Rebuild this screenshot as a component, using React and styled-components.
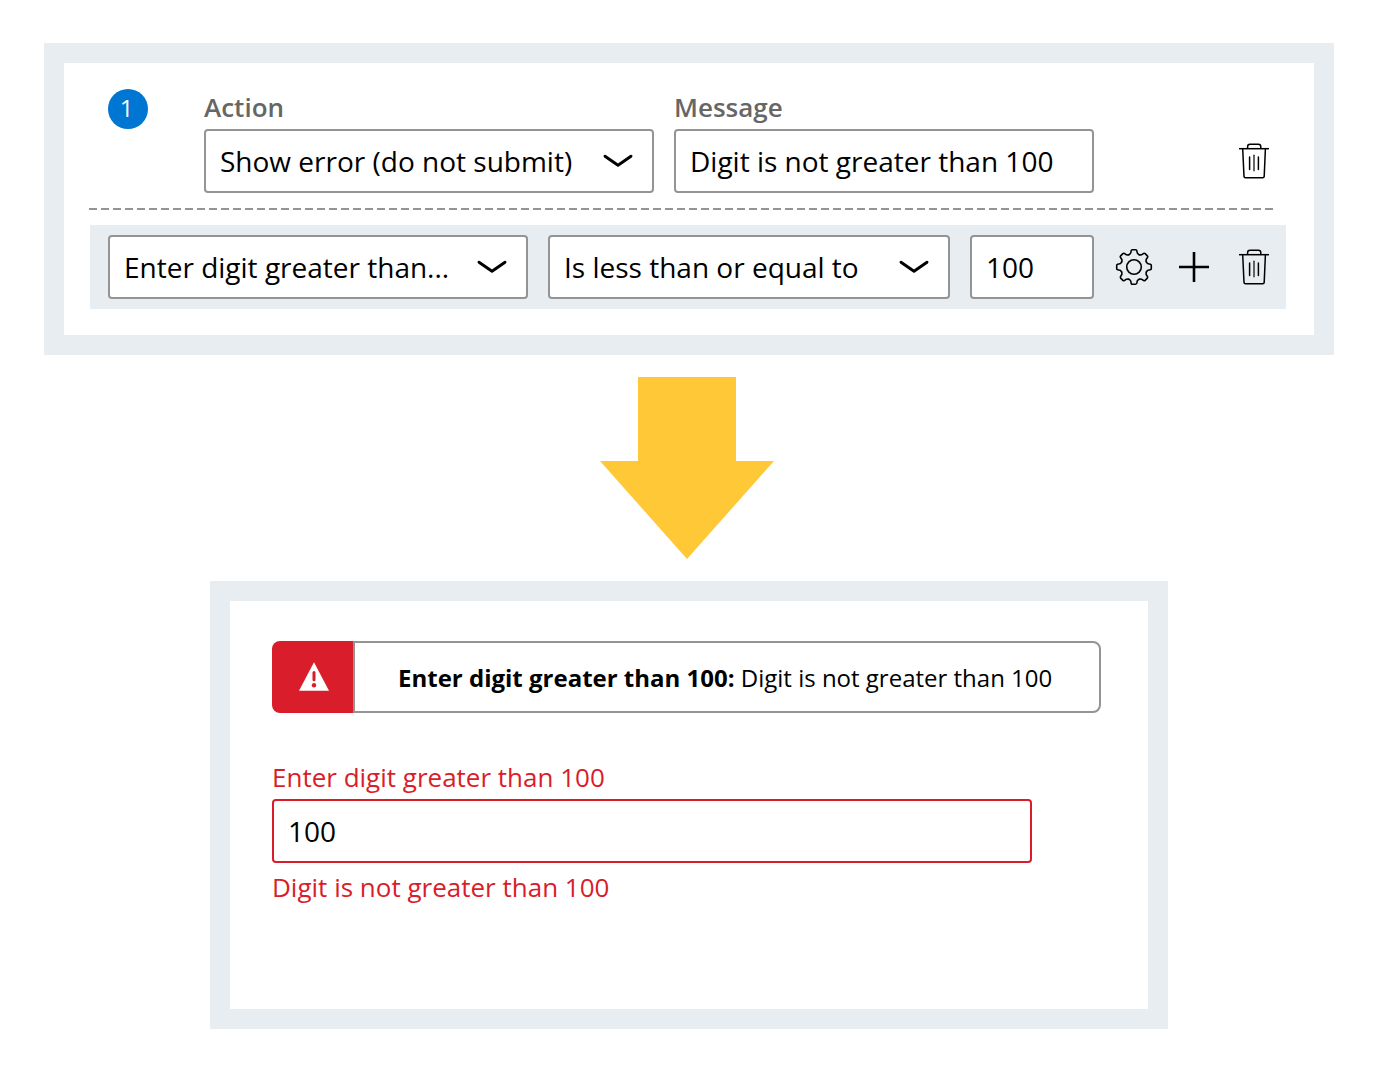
import React, { useState } from "react";
import styled, { createGlobalStyle } from "styled-components";

const color = {
  frame: "#e8edf1",
  line: "#949494",
  label: "#666666",
  red: "#d91d2a",
  blue: "#0076d3",
  yellow: "#ffc836",
};

const GlobalStyle = createGlobalStyle`
  *, *::before, *::after { box-sizing: border-box; }
  body {
    margin: 0;
    background: #ffffff;
    color: #000000;
    font-family: "Open Sans", "Noto Sans", sans-serif;
  }
  input, select, button { font-family: inherit; color: inherit; }
`;

const Page = styled.main`
  display: flex;
  flex-direction: column;
  align-items: center;
  gap: 22px;
  padding: 43px 46px 48px 44px;
`;

const Panel = styled.section`
  width: 100%;
  max-width: ${(p) => p.$maxWidth || "none"};
  border: 20px solid ${color.frame};
  padding: ${(p) => p.$padding};
`;

const RuleHeader = styled.div`
  display: flex;
  align-items: flex-end;
  padding: 0 2px 0 18px;
`;

const StepBadge = styled.span`
  display: flex;
  align-items: center;
  justify-content: center;
  align-self: flex-start;
  flex: none;
  width: 40px;
  height: 40px;
  margin-right: 56px;
  padding: 0 3px 2px 0;
  border-radius: 50%;
  background: ${color.blue};
  color: #ffffff;
  font-size: 24px;
  line-height: 36px;
`;

const Fields = styled.div`
  display: flex;
  flex: 1;
  min-width: 0;
  gap: 20px;
`;

const Field = styled.div`
  display: flex;
  flex-direction: column;
  flex: ${(p) => p.$grow || 1} 1 0;
  min-width: 0;
`;

const Label = styled.label`
  padding-bottom: 4px;
  color: ${(p) => (p.$error ? color.red : color.label)};
  font-size: 26px;
  font-weight: ${(p) => (p.$error ? 400 : 600)};
  line-height: 36px;
`;

const HelpText = styled.p`
  margin: 0;
  color: ${color.red};
  font-size: 26px;
  line-height: 48px;
`;

const TextInput = styled.input`
  width: 100%;
  height: 64px;
  padding: 0 14px;
  border: 2px solid ${(p) => (p.$error ? color.red : color.line)};
  border-radius: 4px;
  background: #ffffff;
  font-size: 28px;
`;

const SelectBox = styled.div`
  position: relative;
`;

const NativeSelect = styled.select`
  display: block;
  width: 100%;
  height: 64px;
  padding: 0 60px 0 14px;
  border: 2px solid ${color.line};
  border-radius: 4px;
  background: #ffffff;
  font-size: 28px;
  appearance: none;
`;

const Chevron = styled.svg`
  position: absolute;
  top: 22px;
  right: 20px;
  pointer-events: none;
`;

const Divider = styled.hr`
  height: 2px;
  margin: 15px 13px 15px -1px;
  border: 0;
  background: repeating-linear-gradient(
    to right,
    ${color.line} 0 8px,
    transparent 8px 12px
  );
`;

const ConditionRow = styled.div`
  display: flex;
  align-items: center;
  padding: 10px 2px 10px 18px;
  background: ${color.frame};
`;

const Actions = styled.div`
  display: flex;
  flex: none;
  justify-content: flex-end;
  width: 180px;
  margin-left: 10px;
`;

const IconButton = styled.button`
  display: flex;
  align-items: center;
  justify-content: center;
  width: 60px;
  height: 64px;
  padding: 0;
  border: 0;
  background: none;
  cursor: pointer;
`;

const ArrowGraphic = styled.svg`
  display: block;
  flex: none;
`;

const Alert = styled.div`
  display: flex;
  min-height: 72px;
  margin-right: 5px;
  margin-bottom: 46px;
`;

const AlertIcon = styled.div`
  display: flex;
  align-items: center;
  flex: none;
  padding: 0 24px 0 27px;
  border-radius: 8px 0 0 8px;
  background: ${color.red};
`;

const AlertText = styled.p`
  flex: 1;
  margin: 0;
  padding: 18px 43px 16px;
  border: 2px solid ${color.line};
  border-radius: 0 8px 8px 0;
  font-size: 24px;
  line-height: 34px;
`;

const FormField = styled.div`
  display: flex;
  flex-direction: column;
  max-width: 760px;
`;

function Select({ id, label, options }) {
  const [value, setValue] = useState(options[0]);
  return (
    <SelectBox>
      <NativeSelect
        id={id}
        aria-label={label}
        value={value}
        onChange={(e) => setValue(e.target.value)}
      >
        {options.map((option) => (
          <option key={option}>{option}</option>
        ))}
      </NativeSelect>
      <Chevron width="32" height="20" viewBox="0 0 32 20" aria-hidden="true">
        <path
          d="M3 5.2L16 14.3L29 5.2"
          fill="none"
          stroke="#000"
          strokeWidth="2.9"
          strokeLinecap="round"
          strokeLinejoin="round"
        />
      </Chevron>
    </SelectBox>
  );
}

function TrashIcon() {
  return (
    <svg width="40" height="40" viewBox="0 0 40 40" fill="none" stroke="#000" strokeWidth="1.5" aria-hidden="true">
      <path d="M5 7.7H35" />
      <path d="M13.6 7.5V5.6Q13.6 3.3 16 3.3H24.4Q26.8 3.3 26.8 5.6V7.5" />
      <path d="M8.7 7.7L10 35.4Q10.1 36.8 11.5 36.8H28.7Q30.1 36.8 30.2 35.4L31.4 7.7" />
      <path d="M15.6 16V28.5M24.4 16V28.5" strokeLinecap="round" />
      <path d="M20 14.3V29.7" stroke="#333" strokeLinecap="round" />
    </svg>
  );
}

const TOOTH =
  "M-5.1 -12.3L-4.4 -12.8C-3.2 -13.3 -3.1 -14 -3 -15.2C-2.9 -16.8 -2.4 -17.3 -1.6 -17.3H1.6C2.4 -17.3 2.9 -16.8 3 -15.2C3.1 -14 3.2 -13.3 4.4 -12.8L5.1 -12.3";

function GearIcon() {
  return (
    <svg width="40" height="40" viewBox="-20 -20 40 40" fill="none" stroke="#000" strokeWidth="1.6" strokeLinecap="round" aria-hidden="true">
      {[0, 45, 90, 135, 180, 225, 270, 315].map((angle) => (
        <path key={angle} d={TOOTH} transform={`rotate(${angle})`} />
      ))}
      <circle r="7.3" />
    </svg>
  );
}

function PlusIcon() {
  return (
    <svg width="40" height="40" viewBox="0 0 40 40" fill="none" stroke="#000" strokeWidth="2.6" aria-hidden="true">
      <path d="M20 5V35M5 20H35" />
    </svg>
  );
}

function WarningIcon() {
  return (
    <svg width="30" height="30" viewBox="0 0 30 30" aria-hidden="true">
      <path d="M15 0.3L30 28.8H0Z" fill="#fff" />
      <path d="M15 10.4V17.8" stroke={color.red} strokeWidth="3" strokeLinecap="round" />
      <circle cx="15" cy="23.2" r="2.2" fill={color.red} />
    </svg>
  );
}

export default function App() {
  return (
    <>
      <GlobalStyle />
      <Page>
        <Panel $padding="26px 28px 26px 26px">
          <RuleHeader>
            <StepBadge>1</StepBadge>
            <Fields>
              <Field $grow={450}>
                <Label htmlFor="action">Action</Label>
                <Select id="action" options={["Show error (do not submit)"]} />
              </Field>
              <Field $grow={420}>
                <Label htmlFor="message">Message</Label>
                <TextInput id="message" defaultValue="Digit is not greater than 100" />
              </Field>
            </Fields>
            <Actions>
              <IconButton type="button" aria-label="Delete rule">
                <TrashIcon />
              </IconButton>
            </Actions>
          </RuleHeader>
          <Divider />
          <ConditionRow>
            <Fields>
              <Field $grow={420}>
                <Select id="source" label="Field" options={["Enter digit greater than..."]} />
              </Field>
              <Field $grow={402}>
                <Select id="operator" label="Operator" options={["Is less than or equal to"]} />
              </Field>
              <Field $grow={124}>
                <TextInput aria-label="Value" defaultValue="100" />
              </Field>
            </Fields>
            <Actions>
              <IconButton type="button" aria-label="Settings">
                <GearIcon />
              </IconButton>
              <IconButton type="button" aria-label="Add condition">
                <PlusIcon />
              </IconButton>
              <IconButton type="button" aria-label="Delete condition">
                <TrashIcon />
              </IconButton>
            </Actions>
          </ConditionRow>
        </Panel>

        <ArrowGraphic width="178" height="182" viewBox="0 0 178 182" aria-hidden="true">
          <path d="M38 0H136V84H174L87 182L0 84H38Z" fill={color.yellow} />
        </ArrowGraphic>

        <Panel $maxWidth="958px" $padding="40px 42px 98px">
          <Alert role="alert">
            <AlertIcon>
              <WarningIcon />
            </AlertIcon>
            <AlertText>
              <strong>Enter digit greater than 100:</strong> Digit is not greater than 100
            </AlertText>
          </Alert>
          <FormField>
            <Label htmlFor="digit" $error>
              Enter digit greater than 100
            </Label>
            <TextInput id="digit" defaultValue="100" aria-describedby="digit-help" aria-invalid="true" $error />
            <HelpText id="digit-help">Digit is not greater than 100</HelpText>
          </FormField>
        </Panel>
      </Page>
    </>
  );
}
